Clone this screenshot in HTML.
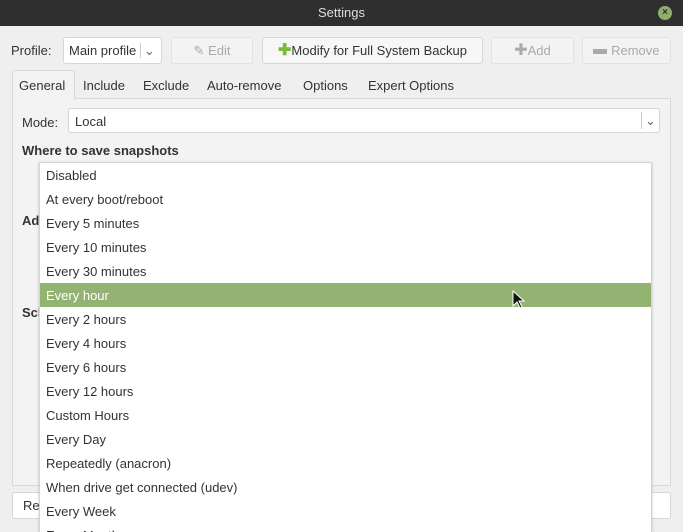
<!DOCTYPE html>
<html style="width:683px;height:532px;overflow:hidden"><head><style>
*{box-sizing:border-box;margin:0;padding:0}
body{width:683px;height:532px;overflow:hidden;background:#efefef;font-family:"Liberation Sans",sans-serif;font-size:13px;color:#333;position:relative}
.a{position:absolute}
.title{left:0;top:0;width:683px;height:26px;background:#2f2f2f;color:#ddd;text-align:center;line-height:26px;font-size:13px}
.close{left:658px;top:6px;width:14px;height:14px;border-radius:50%;background:#8fae6c;color:#2f2f2f;font-size:10px;line-height:14px;text-align:center;font-weight:bold}
.btn{border:1px solid #d6d6d6;border-radius:3px;background:#f7f7f7;height:27px;line-height:25px;text-align:center}
.dis{color:#aaa;background:#f3f3f3;border-color:#e2e2e2}
.panel{left:12px;top:98px;width:659px;height:388px;border:1px solid #d8d8d8;background:#f3f3f3}
.menu{left:39px;top:162px;width:613px;height:370px;overflow:hidden;background:#fff;border:1px solid #d4d4d4;border-bottom:none;box-shadow:0 1px 3px rgba(0,0,0,.2)}
.it{height:24px;line-height:25px;padding-left:6px;color:#333}
.sel{background:#92b372;color:#fff}
b{font-weight:bold}
</style></head><body>
<div class="a title">Settings</div>
<div class="a close">×</div>
<div class="a" style="left:11px;top:43px">Profile:</div>
<div class="a btn" style="left:63px;top:37px;width:99px;background:#fff;text-align:left;padding-left:5px">Main profile <span style="border-left:1px solid #ccc;padding-left:3px;color:#666">⌄</span></div>
<div class="a btn dis" style="left:171px;top:37px;width:82px">✎ Edit</div>
<div class="a btn" style="left:262px;top:37px;width:221px"><span style="color:#7dbb3a;font-weight:bold;font-size:16px">✚</span>Modify for Full System Backup</div>
<div class="a btn dis" style="left:491px;top:37px;width:83px"><span style="font-size:16px">✚</span>Add</div>
<div class="a btn dis" style="left:582px;top:37px;width:89px"><span style="display:inline-block;width:14px;height:5px;background:#aaa;vertical-align:middle"></span> Remove</div>
<div class="a panel"></div>
<div class="a" style="left:12px;top:70px;width:63px;height:30px;background:#f3f3f3;border:1px solid #d8d8d8;border-bottom:none;border-radius:3px 3px 0 0"></div>
<div class="a" style="left:19px;top:78px">General</div>
<div class="a" style="left:83px;top:78px">Include</div>
<div class="a" style="left:143px;top:78px">Exclude</div>
<div class="a" style="left:207px;top:78px">Auto-remove</div>
<div class="a" style="left:303px;top:78px">Options</div>
<div class="a" style="left:368px;top:78px">Expert Options</div>
<div class="a" style="left:22px;top:115px">Mode:</div>
<div class="a btn" style="left:68px;top:108px;width:592px;height:25px;line-height:25px;background:#fff;text-align:left;padding-left:6px">Local<span style="position:absolute;right:0;top:3px;height:17px;line-height:17px;border-left:1px solid #ccc;width:18px;text-align:center;color:#666">⌄</span></div>
<div class="a" style="left:22px;top:143px"><b>Where to save snapshots</b></div>
<div class="a" style="left:22px;top:213px"><b>Ad</b></div>
<div class="a" style="left:22px;top:305px"><b>Sch</b></div>
<div class="a btn" style="left:12px;top:492px;width:659px;background:#fff;text-align:left;padding-left:10px">Res</div>
<div class="a menu">
<div class="it">Disabled</div>
<div class="it">At every boot/reboot</div>
<div class="it">Every 5 minutes</div>
<div class="it">Every 10 minutes</div>
<div class="it">Every 30 minutes</div>
<div class="it sel">Every hour</div>
<div class="it">Every 2 hours</div>
<div class="it">Every 4 hours</div>
<div class="it">Every 6 hours</div>
<div class="it">Every 12 hours</div>
<div class="it">Custom Hours</div>
<div class="it">Every Day</div>
<div class="it">Repeatedly (anacron)</div>
<div class="it">When drive get connected (udev)</div>
<div class="it">Every Week</div>
<div class="it">Every Month</div>
</div>
<svg class="a" style="left:512px;top:290px" width="14" height="20" viewBox="0 0 14 20"><path d="M1 1 L1 16 L5 12 L8 18 L10 17 L7 11 L12 11 Z" fill="#111" stroke="#fff" stroke-width="1"/></svg>
</body></html>
